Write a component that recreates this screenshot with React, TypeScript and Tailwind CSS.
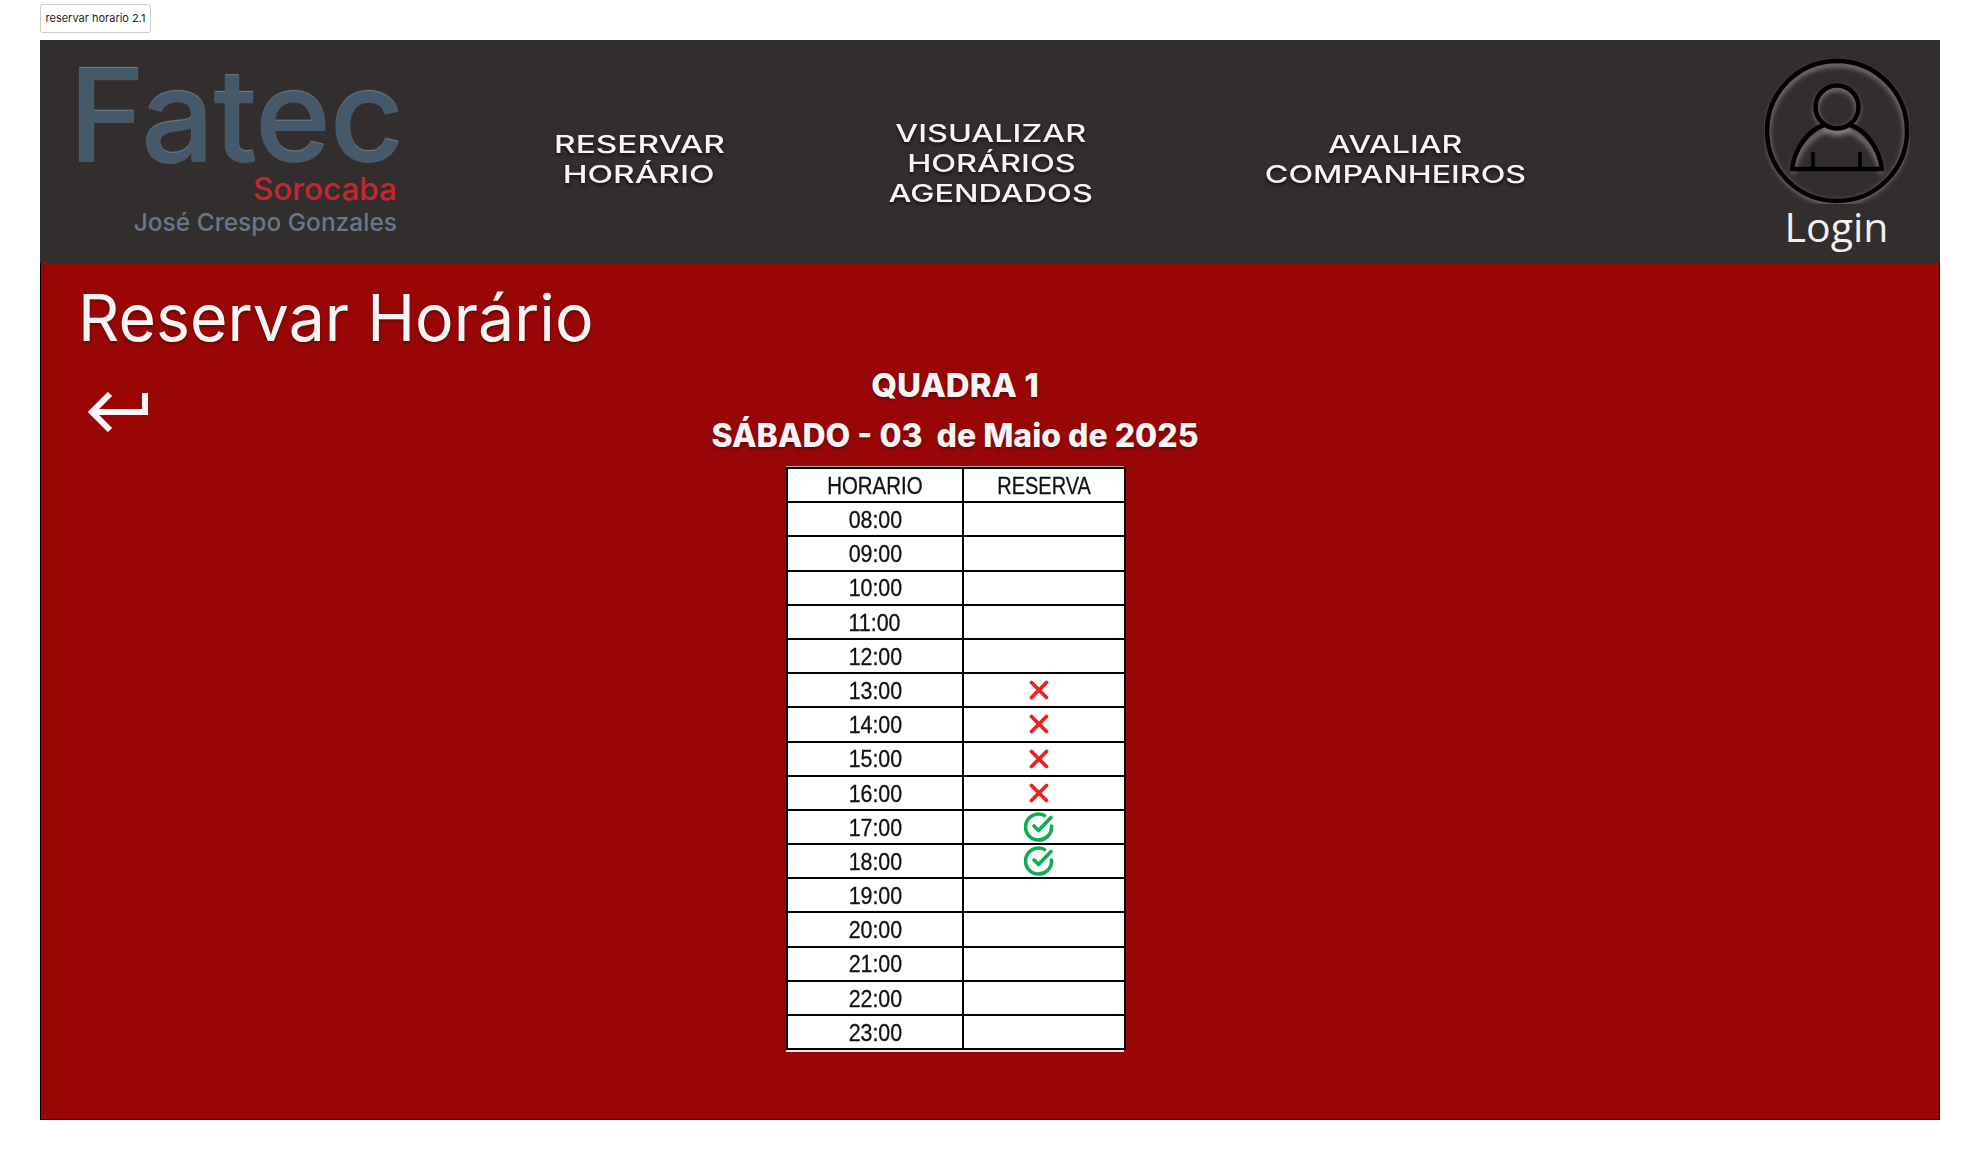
const hours = ["08:00","09:00","10:00","11:00","12:00","13:00","14:00","15:00","16:00","17:00","18:00","19:00","20:00","21:00","22:00","23:00"];
const status: Record<string, "x" | "ok"> = { "13:00": "x", "14:00": "x", "15:00": "x", "16:00": "x", "17:00": "ok", "18:00": "ok" };

function XIcon() {
  return (
    <svg width="20" height="20" viewBox="0 0 20 20" fill="none" stroke="#ee2222" strokeWidth="3.8" strokeLinecap="round">
      <path d="M2.5 2.5 L17.5 17.5 M17.5 2.5 L2.5 17.5" />
    </svg>
  );
}

function CheckIcon() {
  return (
    <svg width="30" height="30" viewBox="0 0 30 30" fill="none" stroke="#12ab55" strokeWidth="3.6" strokeLinecap="round" strokeLinejoin="round">
      <path d="M27.5 14 A13 13 0 1 1 20.5 3.5" />
      <path d="M10 14 L14.5 18.5 L27 5.5" />
    </svg>
  );
}

function Avatar() {
  return (
    <svg width="146" height="146" viewBox="0 0 146 146" fill="none">
      <defs>
        <filter id="glow" x="-20%" y="-20%" width="140%" height="140%">
          <feGaussianBlur stdDeviation="2.5" />
        </filter>
      </defs>
      <g stroke="#8a8484" strokeWidth="4" filter="url(#glow)" transform="translate(0 2.5)">
        <circle cx="73" cy="73" r="69" />
        <circle cx="73" cy="49" r="21" />
        <path d="M29 113 C31 91 48 74 62 70 C69 74 77 74 84 70 C98 74 115 91 117 113" />
      </g>
      <g stroke="#000" strokeWidth="4.5">
        <circle cx="73" cy="73" r="70" />
        <circle cx="73" cy="49" r="21.5" />
        <path d="M28 111 C31 89 45 72 60 67 M86 67 C101 72 115 89 118 111" />
        <path d="M26 111 H120" />
        <path d="M49 94 V111 M96 94 V111" strokeWidth="3.5" />
      </g>
    </svg>
  );
}

function NavItem({ w, pt, sx, lines }: { w: string; pt: string; sx: string; lines: string[] }) {
  return (
    <div className={`${w} ${pt} flex flex-col items-center text-center`}>
      {lines.map((l) => (
        <div key={l} className={`${sx} h-[30px] text-[24px] leading-[30px] font-medium text-[#f8f4f4] font-['Inter'] whitespace-nowrap [text-shadow:0_2px_3px_rgba(0,0,0,0.7)]`}>
          {l}
        </div>
      ))}
    </div>
  );
}

export default function App() {
  return (
    <div className="min-h-[1160px] bg-white font-['Inter',sans-serif]">
      <div className="h-10 pl-10 pt-1">
        <div className="flex h-[29px] w-[111px] items-center justify-center rounded-[3px] border border-[#cccccc] text-[11px] text-[#1e1e1e]">
          reservar horario 2.1
        </div>
      </div>
      <div className="mx-10 h-[1080px] w-[1900px] flex flex-col">
        <header className="flex h-[223px] shrink-0 items-center bg-[#332e2e]">
          <div className="w-[440px] h-full pl-[36px]">
            <div className="flex w-[321px] flex-col items-end">
              <div className="h-[118px] w-full -translate-x-[7px] pt-[21px] text-[129px] leading-[109px] font-medium tracking-[-1px] text-[#46596a] whitespace-nowrap [text-shadow:0_-1px_1px_#73838f]">
                Fatec
              </div>
              <div className="mt-[15px] h-[31px] text-[31.5px] leading-[31px] font-medium text-[#c4282d]">Sorocaba</div>
              <div className="mt-[2px] text-[24.5px] leading-[32px] font-medium text-[#66788a]">José Crespo Gonzales</div>
            </div>
          </div>
          <NavItem w="w-[318px]" pt="pt-[16px]" sx="scale-x-[1.39]" lines={["RESERVAR", "HORÁRIO"]} />
          <NavItem w="w-[386px]" pt="pt-[24px]" sx="scale-x-[1.35]" lines={["VISUALIZAR", "HORÁRIOS", "AGENDADOS"]} />
          <NavItem w="w-[422px]" pt="pt-[16px]" sx="scale-x-[1.34]" lines={["AVALIAR", "COMPANHEIROS"]} />
          <div className="w-[126px]" />
          <div className="w-[208px] h-full flex flex-col items-center pt-[18px] pl-[1px]">
            <Avatar />
            <div className="mt-[-2px] text-[41px] leading-[48px] text-[#f5efef] font-['Open_Sans',sans-serif]">Login</div>
          </div>
        </header>
        <main className="flex-1 bg-[#980606] border-x border-b border-black">
          <h1 className="pl-[37px] pt-[17px] text-[64.4px] leading-[77px] font-normal text-[#f5f5f5] [text-shadow:0_2px_3px_rgba(0,0,0,0.3)]">
            Reservar Horário
          </h1>
          <div className="flex">
            <div className="w-[669px] pl-[47px] pt-[35px] shrink-0">
              <svg width="62" height="40" viewBox="0 0 62 40" fill="none" stroke="#fdf6fd" strokeWidth="6">
                <path d="M22 2 L4 20 L22 38" strokeWidth="6" />
                <path d="M4 20 H57 V1" />
              </svg>
            </div>
            <div className="w-[490px] flex flex-col items-center">
              <div className="mt-[3px] text-[33px] leading-[50px] font-extrabold text-[#f5f5f5] whitespace-nowrap [text-shadow:0_2px_3px_rgba(0,0,0,0.3)]">QUADRA 1</div>
              <div className="mt-[1px] text-[32px] leading-[50px] font-extrabold text-[#f5f5f5] whitespace-pre [text-shadow:0_2px_3px_rgba(0,0,0,0.3)]">SÁBADO - 03  de Maio de 2025</div>
              <div className="mt-[5px] w-[338px] border-t border-[#aaaaaa] border-b-2 border-b-[#e8e8e8]">
                <table className="w-[338px] table-fixed border-collapse bg-white font-['Liberation_Sans',sans-serif] text-[23.5px] text-[#111111] [-webkit-text-stroke:0.3px_#111111]">
                  <colgroup>
                    <col className="w-[176px]" />
                    <col className="w-[162px]" />
                  </colgroup>
                  <thead>
                    <tr className="h-[34.2px]">
                      <th className="border-2 border-black p-0 pt-[3px] font-normal leading-none pr-[1px]"><span className="inline-block scale-x-[0.87]">HORARIO</span></th>
                      <th className="border-2 border-black p-0 pt-[3px] font-normal leading-none"><span className="inline-block scale-x-[0.85]">RESERVA</span></th>
                    </tr>
                  </thead>
                  <tbody>
                    {hours.map((h) => (
                      <tr key={h} className="h-[34.2px]">
                        <td className="border-2 border-black p-0 pt-[3px] text-center leading-none"><span className="inline-block scale-x-[0.91]">{h}</span></td>
                        <td className="border-2 border-black p-0">
                          <div className="flex h-[30px] items-center justify-center pr-[10px]">
                            {status[h] === "x" && <XIcon />}
                            {status[h] === "ok" && <CheckIcon />}
                          </div>
                        </td>
                      </tr>
                    ))}
                  </tbody>
                </table>
              </div>
            </div>
          </div>
        </main>
      </div>
    </div>
  );
}
